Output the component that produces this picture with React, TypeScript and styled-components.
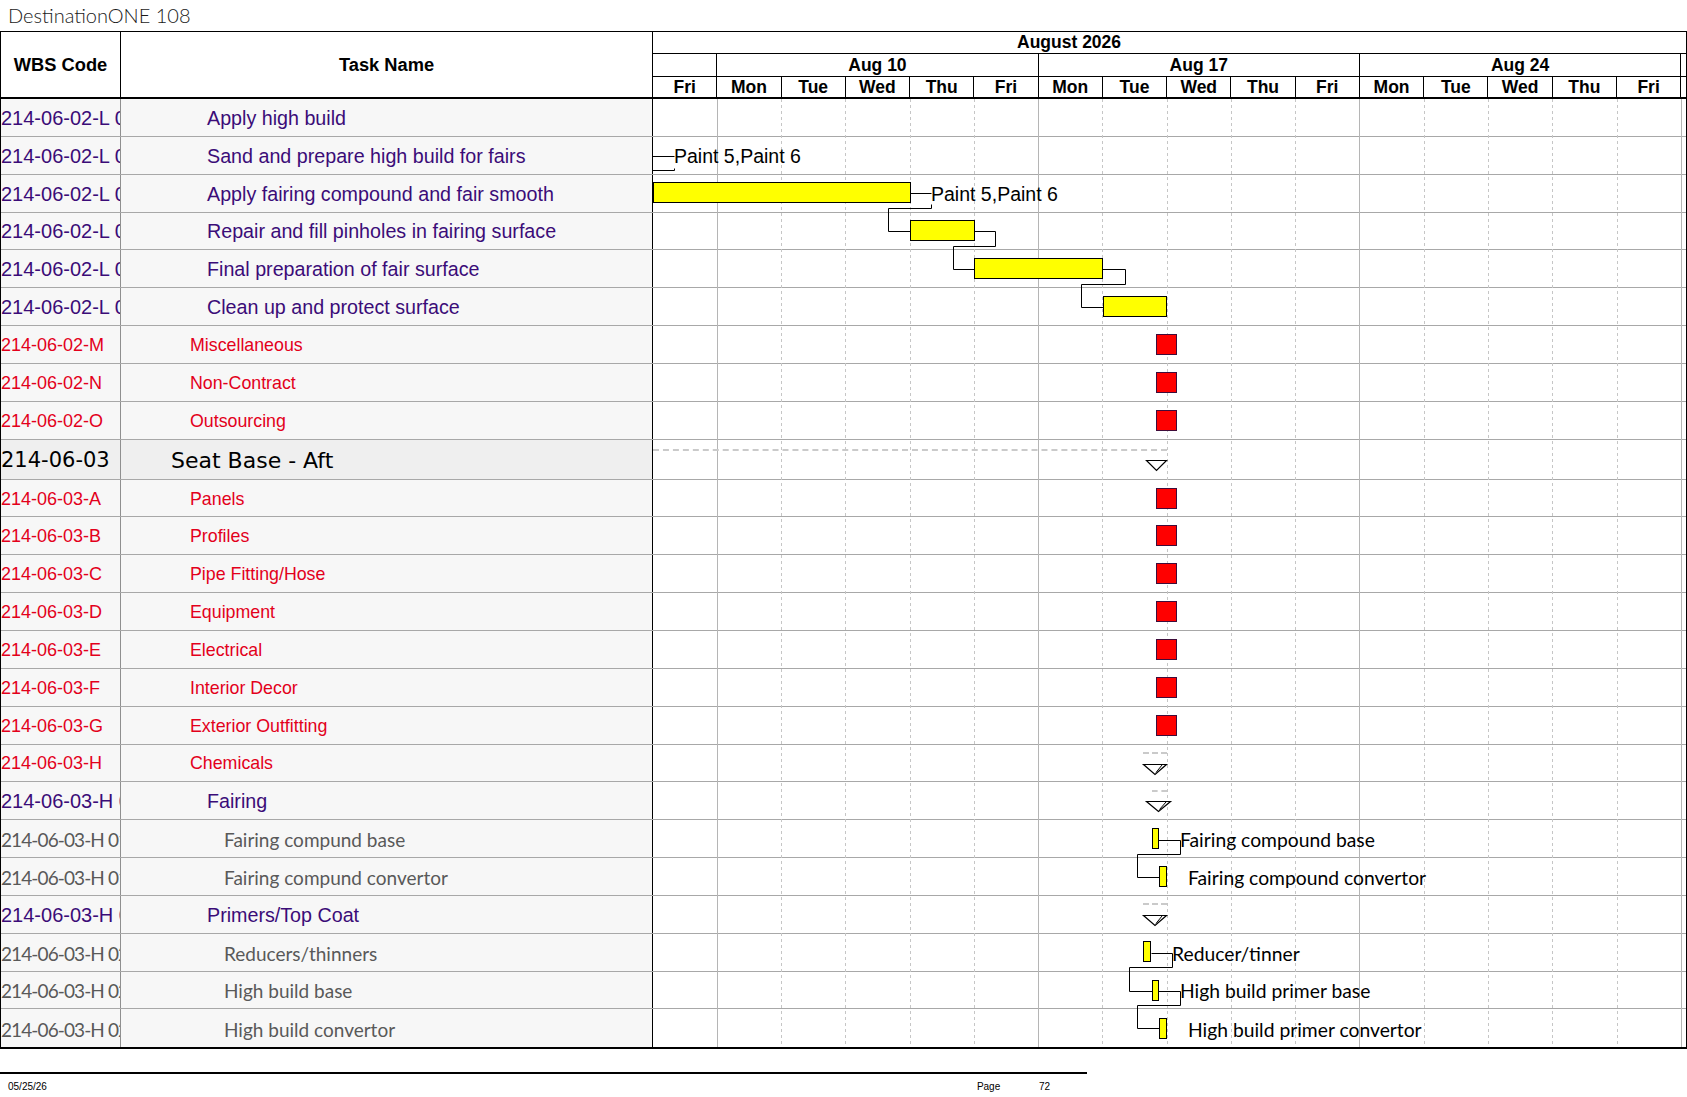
import React from "react"
import styled, { createGlobalStyle } from "styled-components"

// chart geometry (px)
const DW = 64.27 // one working day
const ROW = 37.85
const SUM_ROW = 40
const BODY_TOP = 99 // page y where the first task row starts
const CHART_LEFT = 653 // page x where day 0 starts
const CHART_W = 1033

type Kind = "task" | "group" | "summary" | "item"

type Mark =
  | { t: "bar"; x: number; w: number; y?: number }
  | { t: "ms"; x: number }
  | { t: "sum"; x: number; w: number; y: number }
  | { t: "tri"; x: number; w: number; y: number; double?: boolean }
  | { t: "label"; x: number; text: string; face: "arial" | "calibri" }

interface Task {
  wbs: string
  name: string
  kind: Kind
  marks?: Mark[]
}

const MS: Mark[] = [{ t: "ms", x: 8 * DW - 11 }]

const tasks: Task[] = [
  { wbs: "214-06-02-L 01", name: "Apply high build", kind: "task" },
  {
    wbs: "214-06-02-L 02",
    name: "Sand and prepare high build for fairs",
    kind: "task",
    marks: [{ t: "label", x: 21, text: "Paint 5,Paint 6", face: "arial" }],
  },
  {
    wbs: "214-06-02-L 03",
    name: "Apply fairing compound and fair smooth",
    kind: "task",
    marks: [
      { t: "bar", x: 0, w: 257.5 },
      { t: "label", x: 278, text: "Paint 5,Paint 6", face: "arial" },
    ],
  },
  { wbs: "214-06-02-L 04", name: "Repair and fill pinholes in fairing surface", kind: "task", marks: [{ t: "bar", x: 4 * DW, w: DW + 1 }] },
  { wbs: "214-06-02-L 05", name: "Final preparation of fair surface", kind: "task", marks: [{ t: "bar", x: 5 * DW, w: 2 * DW }] },
  { wbs: "214-06-02-L 06", name: "Clean up and protect surface", kind: "task", marks: [{ t: "bar", x: 7 * DW, w: DW }] },
  { wbs: "214-06-02-M", name: "Miscellaneous", kind: "group", marks: MS },
  { wbs: "214-06-02-N", name: "Non-Contract", kind: "group", marks: MS },
  { wbs: "214-06-02-O", name: "Outsourcing", kind: "group", marks: MS },
  {
    wbs: "214-06-03",
    name: "Seat Base - Aft",
    kind: "summary",
    marks: [
      { t: "sum", x: 0, w: 8 * DW, y: 9 },
      { t: "tri", x: 493, w: 21, y: 20 },
    ],
  },
  { wbs: "214-06-03-A", name: "Panels", kind: "group", marks: MS },
  { wbs: "214-06-03-B", name: "Profiles", kind: "group", marks: MS },
  { wbs: "214-06-03-C", name: "Pipe Fitting/Hose", kind: "group", marks: MS },
  { wbs: "214-06-03-D", name: "Equipment", kind: "group", marks: MS },
  { wbs: "214-06-03-E", name: "Electrical", kind: "group", marks: MS },
  { wbs: "214-06-03-F", name: "Interior Decor", kind: "group", marks: MS },
  { wbs: "214-06-03-G", name: "Exterior Outfitting", kind: "group", marks: MS },
  {
    wbs: "214-06-03-H",
    name: "Chemicals",
    kind: "group",
    marks: [
      { t: "sum", x: 490, w: 24, y: 7 },
      { t: "tri", x: 490, w: 24, y: 19, double: true },
    ],
  },
  {
    wbs: "214-06-03-H 01",
    name: "Fairing",
    kind: "task",
    marks: [
      { t: "sum", x: 499, w: 15, y: 7.5 },
      { t: "tri", x: 493, w: 25, y: 18.5, double: true },
    ],
  },
  {
    wbs: "214-06-03-H 01 01",
    name: "Fairing compund base",
    kind: "item",
    marks: [
      { t: "bar", x: 498.7, w: 7, y: 8 },
      { t: "label", x: 527, text: "Fairing compound base", face: "calibri" },
    ],
  },
  {
    wbs: "214-06-03-H 01 02",
    name: "Fairing compund convertor",
    kind: "item",
    marks: [
      { t: "bar", x: 506.3, w: 7.4, y: 7.7 },
      { t: "label", x: 535, text: "Fairing compound convertor", face: "calibri" },
    ],
  },
  {
    wbs: "214-06-03-H 02",
    name: "Primers/Top Coat",
    kind: "task",
    marks: [
      { t: "sum", x: 490, w: 24, y: 7 },
      { t: "tri", x: 490, w: 24, y: 18.7, double: true },
    ],
  },
  {
    wbs: "214-06-03-H 02 01",
    name: "Reducers/thinners",
    kind: "item",
    marks: [
      { t: "bar", x: 490.3, w: 7.4, y: 7.4 },
      { t: "label", x: 519, text: "Reducer/tinner", face: "calibri" },
    ],
  },
  {
    wbs: "214-06-03-H 02 02",
    name: "High build base",
    kind: "item",
    marks: [
      { t: "bar", x: 498.7, w: 7, y: 8.3 },
      { t: "label", x: 527, text: "High build primer base", face: "calibri" },
    ],
  },
  {
    wbs: "214-06-03-H 02 03",
    name: "High build convertor",
    kind: "item",
    marks: [
      { t: "bar", x: 506.3, w: 7.4, y: 8.4 },
      { t: "label", x: 535, text: "High build primer convertor", face: "calibri" },
    ],
  },
]

// link lines, in page coordinates
const links: number[][][] = [
  [[652, 155.7], [674, 155.7]],
  [[652, 170.3], [674, 170.3], [674, 167.5]],
  [[910, 192.7], [931, 192.7]],
  [[931, 204], [931, 207.7], [888.3, 207.7], [888.3, 231.3], [910.3, 231.3]],
  [[973.3, 231.3], [995.3, 231.3], [995.3, 246], [953.3, 246], [953.3, 269.3], [974.3, 269.3]],
  [[1102.3, 269.3], [1124.6, 269.3], [1124.6, 284.3], [1081.3, 284.3], [1081.3, 307.3], [1103.3, 307.3]],
  [[1158.3, 840], [1180, 840], [1180, 854], [1137.3, 854], [1137.3, 876.7], [1159.3, 876.7]],
  [[1150.7, 953.3], [1171.7, 953.3], [1171.7, 967.3], [1129.3, 967.3], [1129.3, 990.7], [1151.7, 990.7]],
  [[1158.3, 990.7], [1180, 990.7], [1180, 1005], [1137.3, 1005], [1137.3, 1028.3], [1159.3, 1028.3]],
]

const weeks = [
  { label: "", days: 1 },
  { label: "Aug 10", days: 5 },
  { label: "Aug 17", days: 5 },
  { label: "Aug 24", days: 5 },
]
const days = ["Fri", "Mon", "Tue", "Wed", "Thu", "Fri", "Mon", "Tue", "Wed", "Thu", "Fri", "Mon", "Tue", "Wed", "Thu", "Fri"]

const bodyHeight = tasks.reduce((s, t) => s + (t.kind === "summary" ? SUM_ROW : ROW), 0)

const GlobalStyle = createGlobalStyle`
  body {
    margin: 0;
    background: #fff;
    font-family: "Liberation Sans", Arial, sans-serif;
  }
`

const Page = styled.div`
  width: 1687px;
`

const Title = styled.div`
  height: 31px;
  padding-left: 8px;
  font-family: Lato, "Liberation Sans", sans-serif;
  font-weight: 300;
  font-size: 20px;
  line-height: 30px;
  color: #1a1a1a;
`

const Sheet = styled.div`
  width: 1687px;
  box-sizing: border-box;
  border: 1px solid #000;
  border-bottom-width: 2px;
`

const Header = styled.div`
  display: grid;
  grid-template-columns: 120px 532px 1fr;
  height: 67px;
  box-sizing: border-box;
  border-bottom: 2px solid #000;
`

const HeadCell = styled.div`
  display: flex;
  align-items: center;
  justify-content: center;
  border-right: 1px solid #000;
  font-weight: bold;
  font-size: 18.3px;
  color: #000;
`

const Timescale = styled.div`
  display: flex;
  flex-direction: column;
`

const MonthRow = styled.div`
  height: 22px;
  box-sizing: border-box;
  border-bottom: 1px solid #000;
  padding-left: 364px;
  font-weight: bold;
  font-size: 17.5px;
  line-height: 21px;
`

const ScaleRow = styled.div<{ $h: number }>`
  display: flex;
  height: ${(p) => p.$h}px;
  box-sizing: border-box;
  border-bottom: ${(p) => (p.$h === 23 ? "1px solid #000" : "none")};
`

const ScaleCell = styled.div<{ $w?: number }>`
  flex: ${(p) => (p.$w ? `0 0 ${p.$w}px` : "1 1 auto")};
  box-sizing: border-box;
  border-right: 1px solid #000;
  display: flex;
  align-items: center;
  justify-content: center;
  font-weight: bold;
  font-size: 17.5px;
  &:last-child {
    border-right: none;
  }
`

const Body = styled.div`
  position: relative;
  background: #fff;
`

const Overlay = styled.svg`
  position: absolute;
  left: 652px;
  top: 0;
  pointer-events: none;
`

const Row = styled.div<{ $h: number }>`
  display: grid;
  grid-template-columns: 120px 532px 1fr;
  height: ${(p) => p.$h}px;
  box-sizing: border-box;
  border-bottom: 1px solid #a8a8a8;
  &:last-child {
    border-bottom: none;
  }
`

const kindText: Record<Kind, { wbs: string; name: string; indent: number; bg: string }> = {
  task: {
    wbs: `font-size: 20px; color: #3b0c78;`,
    name: `font-size: 19.7px; color: #3b0c78;`,
    indent: 86,
    bg: "#f7f7f7",
  },
  group: {
    wbs: `font-size: 18px; color: #e3001b;`,
    name: `font-size: 17.8px; color: #e3001b;`,
    indent: 69,
    bg: "#f7f7f7",
  },
  summary: {
    wbs: `font-family: "DejaVu Sans", sans-serif; font-size: 21px; color: #000;`,
    name: `font-family: "DejaVu Sans", sans-serif; font-size: 22px; color: #000;`,
    indent: 50,
    bg: "#efefef",
  },
  item: {
    wbs: `font-family: Lato, "Open Sans", sans-serif; font-size: 19px; letter-spacing: -0.9px; color: #595959;`,
    name: `font-family: Lato, "Open Sans", sans-serif; font-size: 19px; color: #595959;`,
    indent: 103,
    bg: "#f7f7f7",
  },
}

const WbsCell = styled.div<{ $kind: Kind }>`
  display: flex;
  align-items: center;
  padding-top: 2px;
  overflow: hidden;
  white-space: nowrap;
  background: ${(p) => kindText[p.$kind].bg};
  border-right: 1px solid #8f8f8f;
  ${(p) => kindText[p.$kind].wbs}
`

const NameCell = styled.div<{ $kind: Kind }>`
  display: flex;
  align-items: center;
  padding-top: 2px;
  white-space: nowrap;
  padding-left: ${(p) => kindText[p.$kind].indent}px;
  background: ${(p) => kindText[p.$kind].bg};
  border-right: 1px solid #000;
  ${(p) => kindText[p.$kind].name}
`

const ChartCell = styled.div`
  position: relative;
`

const Bar = styled.div`
  position: absolute;
  height: 21px;
  box-sizing: border-box;
  background: #ffff00;
  border: 1px solid #000;
`

const Milestone = styled.div`
  position: absolute;
  top: 8px;
  width: 21px;
  height: 21px;
  box-sizing: border-box;
  background: #ff0000;
  border: 1.5px solid #3f0c3a;
`

const SummaryLine = styled.div`
  position: absolute;
  height: 0;
  border-top: 2px dashed #cacaca;
`

const Triangle = styled.svg`
  position: absolute;
  overflow: visible;
`

const BarLabel = styled.span<{ $face: "arial" | "calibri" }>`
  position: absolute;
  top: 0;
  bottom: 0;
  padding-top: 2px;
  display: flex;
  align-items: center;
  white-space: nowrap;
  color: #000;
  font-family: ${(p) => (p.$face === "arial" ? `"Liberation Sans", Arial, sans-serif` : `Lato, "Open Sans", sans-serif`)};
  font-size: ${(p) => (p.$face === "arial" ? "19.5px" : "19.3px")};
`

const Footer = styled.footer`
  display: flex;
  align-items: center;
  width: 1087px;
  height: 26px;
  margin-top: 23px;
  box-sizing: border-box;
  padding-left: 8px;
  padding-right: 37px;
  border-top: 2px solid #000;
  font-size: 10px;
  color: #000;
`

const PageWord = styled.span`
  margin-left: auto;
  width: 62px;
`

const ChartMark = ({ m }: { m: Mark }) => {
  switch (m.t) {
    case "bar":
      return <Bar style={{ left: m.x, width: m.w, top: m.y ?? 7.6 }} />
    case "ms":
      return <Milestone style={{ left: m.x }} />
    case "sum":
      return <SummaryLine style={{ left: m.x, width: m.w, top: m.y }} />
    case "tri":
      return (
        <Triangle width={m.w} height={11} style={{ left: m.x, top: m.y }}>
          <polygon points={`0.5,0.5 ${m.w - 0.5},0.5 ${m.w / 2},10.5`} fill="#fff" stroke="#000" strokeWidth={1.2} />
          {m.double && <line x1={m.w - 5} y1={1} x2={m.w / 2 + 1} y2={8.5} stroke="#000" strokeWidth={1} />}
        </Triangle>
      )
    case "label":
      return (
        <BarLabel $face={m.face} style={{ left: m.x }}>
          {m.text}
        </BarLabel>
      )
  }
}

const px = (v: number) => Math.round(v) + 0.5

const Gridlines = () => (
  <Overlay width={CHART_W} height={bodyHeight}>
    {Array.from({ length: 16 }, (_, i) => {
      const n = i + 1
      const x = Math.floor(n * DW) + 0.5
      const solid = n === 1 || n === 6 || n === 11 || n === 16
      return (
        <line
          key={n}
          x1={x}
          x2={x}
          y1={0}
          y2={bodyHeight}
          stroke={solid ? "#b5b5b5" : "#c6c6c6"}
          strokeDasharray={solid ? undefined : "3 3"}
        />
      )
    })}
    {links.map((pts, i) => (
      <polyline
        key={i}
        points={pts.map(([x, y]) => `${px(x - CHART_LEFT)},${px(y - BODY_TOP)}`).join(" ")}
        fill="none"
        stroke="#000"
        strokeWidth={1}
      />
    ))}
  </Overlay>
)

export default function App() {
  return (
    <Page>
      <GlobalStyle />
      <Title>DestinationONE 108</Title>
      <Sheet>
        <Header>
          <HeadCell>WBS Code</HeadCell>
          <HeadCell>Task Name</HeadCell>
          <Timescale>
            <MonthRow>August 2026</MonthRow>
            <ScaleRow $h={23}>
              {weeks.map((w, i) => (
                <ScaleCell key={i} $w={w.days * DW}>
                  {w.label}
                </ScaleCell>
              ))}
              <ScaleCell />
            </ScaleRow>
            <ScaleRow $h={20}>
              {days.map((d, i) => (
                <ScaleCell key={i} $w={DW}>
                  {d}
                </ScaleCell>
              ))}
              <ScaleCell />
            </ScaleRow>
          </Timescale>
        </Header>
        <Body>
          <Gridlines />
          {tasks.map((t, i) => (
            <Row key={i} $h={t.kind === "summary" ? SUM_ROW : ROW}>
              <WbsCell $kind={t.kind}>{t.wbs}</WbsCell>
              <NameCell $kind={t.kind}>{t.name}</NameCell>
              <ChartCell>
                {t.marks?.map((m, j) => (
                  <ChartMark key={j} m={m} />
                ))}
              </ChartCell>
            </Row>
          ))}
        </Body>
      </Sheet>
      <Footer>
        <span>05/25/26</span>
        <PageWord>Page</PageWord>
        <span>72</span>
      </Footer>
    </Page>
  )
}
